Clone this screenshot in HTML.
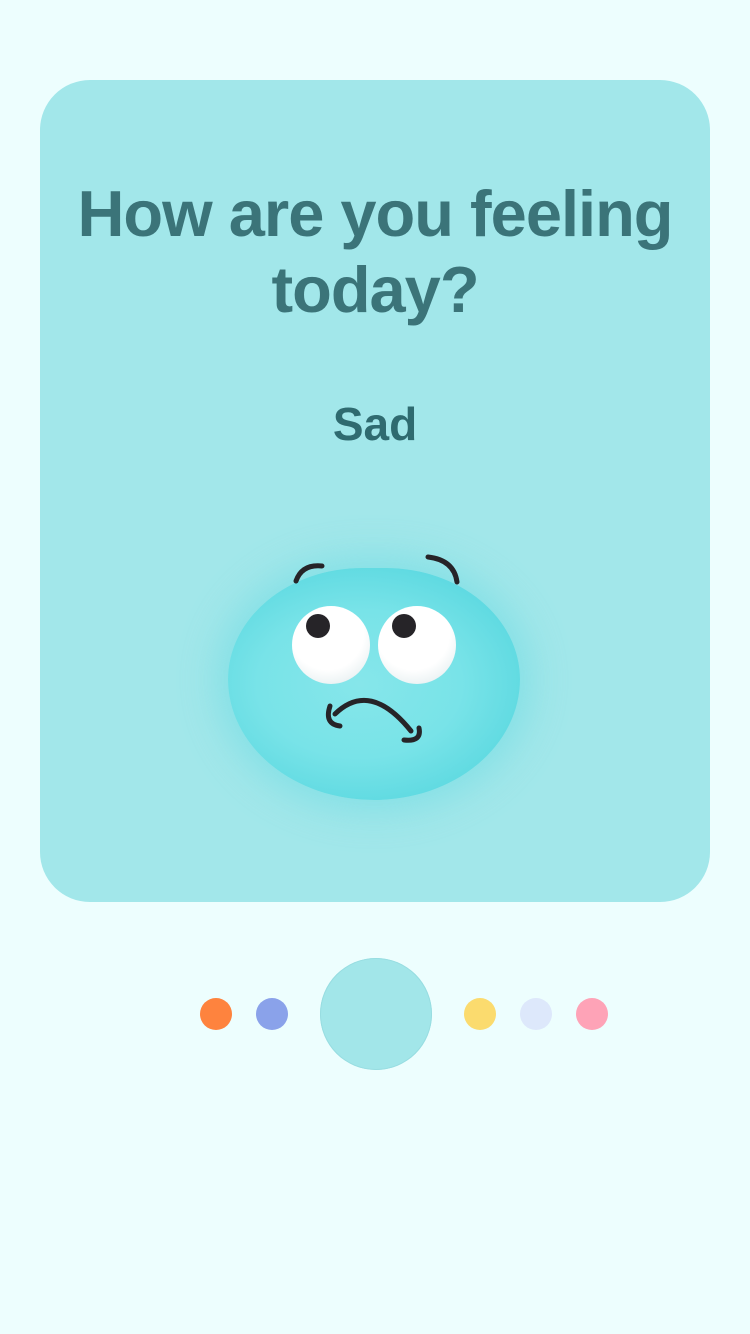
<!DOCTYPE html>
<html><head><style>
html,body{margin:0;padding:0;width:750px;height:1334px;background:#edfefe;overflow:hidden;font-family:"Liberation Sans",sans-serif}
.card{position:absolute;left:40px;top:80px;width:670px;height:822px;background:#a2e7ea;border-radius:50px}
h1{position:absolute;left:0;top:176px;width:750px;margin:0;text-align:center;font-size:65px;line-height:76px;font-weight:bold;color:#3b7479;letter-spacing:-1px}
.sad{position:absolute;left:0;top:397px;width:750px;text-align:center;font-size:46px;font-weight:bold;color:#2f6b70}
.blob{position:absolute;left:228px;top:568px;width:292px;height:232px;border-radius:46% 46% 50% 50%/48% 48% 52% 52%;
background:radial-gradient(ellipse at 45% 50%,#86e6ea 0%,#78e3e8 45%,#5ad8e0 80%,#3fcfd9 100%);
box-shadow:0 0 40px 10px rgba(90,215,225,0.45)}
.eye{position:absolute;width:78px;height:78px;border-radius:50%;background:radial-gradient(circle at 45% 35%,#fff 55%,#eef4f5 75%,#c9d2d6 100%)}
.pup{position:absolute;width:24px;height:24px;border-radius:50%;background:#262428}
.dot{position:absolute;width:32px;height:32px;border-radius:50%;top:998px}
</style></head><body>
<div class="card"></div>
<h1>How are you feeling<br>today?</h1>
<div class="sad">Sad</div>
<div class="blob"></div>
<div class="eye" style="left:292px;top:606px"></div>
<div class="eye" style="left:378px;top:606px"></div>
<div class="pup" style="left:306px;top:614px"></div>
<div class="pup" style="left:392px;top:614px"></div>
<svg width="750" height="1334" style="position:absolute;left:0;top:0" fill="none" stroke="#262428" stroke-width="5" stroke-linecap="round">
<path d="M296 581 Q302 564 322 566"/>
<path d="M428 557 Q454 560 457 582"/>
<path d="M335 714 Q370 680 411 731"/>
<path d="M330 706 Q324 724 340 726"/>
<path d="M419 728 Q422 742 404 740"/>
</svg>
<div class="dot" style="left:200px;background:#fe833e"></div>
<div class="dot" style="left:256px;background:#8aa2ea"></div>
<div style="position:absolute;left:320px;top:958px;width:112px;height:112px;border-radius:50%;background:#a2e6e9;box-shadow:inset 0 0 0 1px #98dde1"></div>
<div class="dot" style="left:464px;background:#fbdb6e"></div>
<div class="dot" style="left:520px;background:#dde8fb"></div>
<div class="dot" style="left:576px;background:#fea3b7"></div>
</body></html>
